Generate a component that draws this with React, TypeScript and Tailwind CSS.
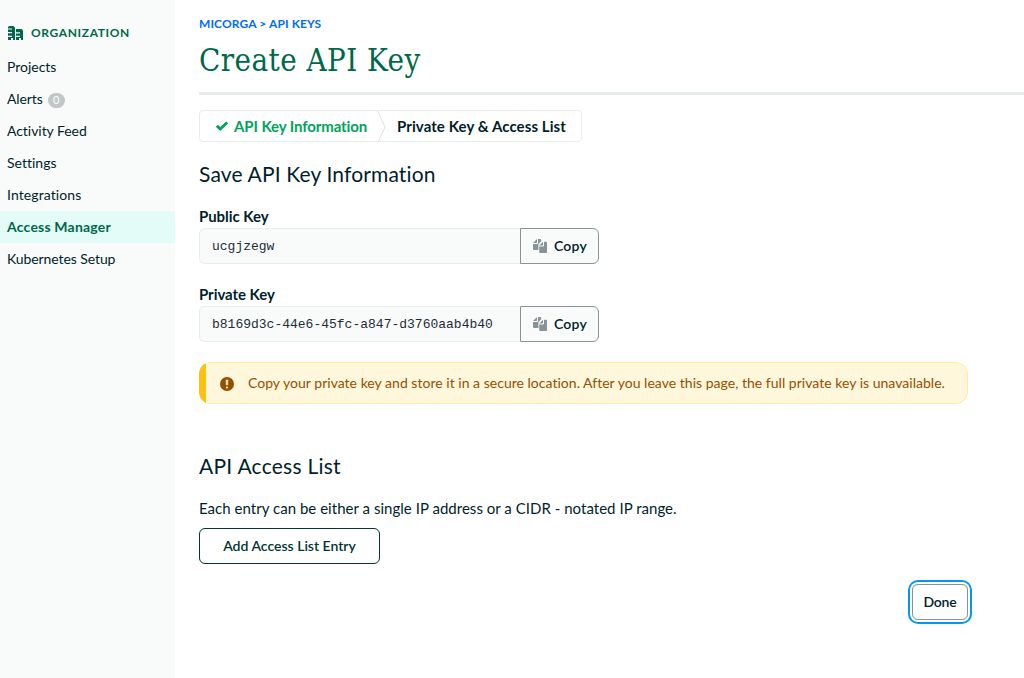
type Item = { label: string; badge?: number; active?: boolean; tracking?: string };

const items: Item[] = [
  { label: "Projects", tracking: "tracking-[-0.02px]" },
  { label: "Alerts", badge: 0, tracking: "tracking-[-0.1px]" },
  { label: "Activity Feed", tracking: "tracking-[-0.05px]" },
  { label: "Settings", tracking: "tracking-[0.01px]" },
  { label: "Integrations", tracking: "tracking-[0.09px]" },
  { label: "Access Manager", active: true, tracking: "tracking-[0.2px]" },
  { label: "Kubernetes Setup", tracking: "tracking-[-0.09px]" },
];

function OrgIcon() {
  return (
    <svg width="16" height="14" viewBox="0 0 16 14" fill="#00684a">
      <path d="M2 0h4.5L8 1.5V14H6v-2H4v2H1v-3h4V9.7H1V7.2h4V6H1V3.6h4V2.4H1V1z" />
      <path d="M9 3h5.5L16 4.5V14h-2v-2h-2v2H9v-3h4V9.7H9V7.5h4V6.2H9z" />
    </svg>
  );
}

function CopyIcon() {
  return (
    <svg width="14" height="14" viewBox="0 0 14 14" fill="#889397">
      <path d="M4 0v3.2a.8.8 0 0 1-.8.8H0zM5 0h2.2a1 1 0 0 1 1 1v1.2L5.4 5v6H1a1 1 0 0 1-1-1V5h4a1 1 0 0 0 1-1z" />
      <path d="M10 2.8v3a.8.8 0 0 1-.8.8H6.2zM11 2.8h2a1 1 0 0 1 1 1V13a1 1 0 0 1-1 1H7.2a1 1 0 0 1-1-1V7.6H10a1 1 0 0 0 1-1z" />
    </svg>
  );
}

function KeyField({ label, value, className }: { label: string; value: string; className: string }) {
  return (
    <div className={className}>
      <div className="h-5 text-[15px] leading-5 font-bold tracking-[-0.05px]">{label}</div>
      <div className="mt-0.5 flex h-9 w-[400px]">
        <div className="flex-1 rounded-l-md border border-r-0 border-[#e8edeb] bg-[#f9fbfa] pl-3 font-['Liberation_Mono',monospace] text-[13px] leading-9 text-[#1c2d38]">
          {value}
        </div>
        <button className="flex w-[79px] items-center rounded-r-md border border-[#889397] bg-[#f9fbfa] pl-3 text-[14px] font-semibold tracking-[0.2px]">
          <CopyIcon />
          <span className="mb-px ml-[7px]">Copy</span>
        </button>
      </div>
    </div>
  );
}

export default function App() {
  return (
    <div className="flex h-[678px] w-[1024px] overflow-hidden bg-white font-[Lato,sans-serif] text-[#001e2b] [font-variant-ligatures:none]">
      <aside className="w-[175px] shrink-0 bg-[#f9fbfa] pt-[15px]">
        <div className="flex h-9 items-center gap-2 pl-[7px] text-[12px] font-bold tracking-[0.62px] text-[#00684a]">
          <OrgIcon />
          <span>ORGANIZATION</span>
        </div>
        <nav>
          {items.map((item) => (
            <div
              key={item.label}
              className={`flex h-8 items-center pb-0.5 pl-[7px] text-[14px] ${item.tracking ?? ""} ${item.active ? "bg-[#e3fcf7] font-bold text-[#00684a]" : ""}`}
            >
              {item.label}
              {item.badge !== undefined && (
                <span className="mt-[5px] ml-[5px] flex h-[15px] w-[17px] items-center justify-center rounded-full bg-[#c1c7c6] text-[11px] text-white">
                  {item.badge}
                </span>
              )}
            </div>
          ))}
        </nav>
      </aside>
      <main className="min-w-0 flex-1 pl-6">
        <div className="mt-4 h-4 text-[12px] leading-4 font-bold tracking-[0.11px] text-[#016bf8]">MICORGA &gt; API KEYS</div>
        <h1 className="mt-2 h-10 font-['DejaVu_Serif_Condensed','DejaVu_Serif',serif] text-[31px] leading-10 tracking-[0.45px] text-[#00684a]">Create API Key</h1>
        <div className="mt-3 h-[3px] bg-[#e8edeb]" />

        <div className="mt-[15px] flex h-8 w-[383px] items-center rounded border border-[#e8edeb] text-[15px] font-bold">
          <svg className="ml-[15px]" width="14" height="10" viewBox="0 0 14 10">
            <path d="M1.8 4.8 5.2 8 12.2 1.5" fill="none" stroke="#00a35c" strokeWidth="2.9" />
          </svg>
          <span className="ml-[5px] w-[134px] tracking-[-0.1px] whitespace-nowrap text-[#00a35c]">API Key Information</span>
          <svg className="ml-[9px]" width="9" height="31" viewBox="0 0 9 31">
            <path d="M.5 0 8 16 1 31" fill="none" stroke="#dce2e0" />
          </svg>
          <span className="ml-[11px] tracking-[0.09px] whitespace-nowrap">Private Key &amp; Access List</span>
        </div>

        <h2 className="mt-[18px] h-7 text-[21px] leading-7 tracking-[0.15px]">Save API Key Information</h2>
        <KeyField className="mt-[18px]" label="Public Key" value="ucgjzegw" />
        <KeyField className="mt-5" label="Private Key" value="b8169d3c-44e6-45fc-a847-d3760aab4b40" />

        <div className="mt-5 flex h-[42px] w-[769px] overflow-hidden rounded-xl">
          <div className="w-[7px] bg-[#ffc010]" />
          <div className="flex flex-1 items-center rounded-r-xl border border-l-0 border-[#ffec9e] bg-[#fef7db] pl-[14px] text-[14px] text-[#944f01]">
            <svg className="mt-px" width="14" height="14" viewBox="0 0 14 14">
              <circle cx="7" cy="7" r="7" fill="#944f01" />
              <path d="M6 3h2l-.3 5H6.3z" fill="#fef7db" stroke="#fef7db" strokeWidth=".5" />
              <circle cx="7" cy="10.5" r="1.1" fill="#fef7db" />
            </svg>
            <span className="mb-px ml-[14px] tracking-[0.02px] whitespace-nowrap">
              Copy your private key and store it in a secure location. After you leave this page, the full private key is unavailable.
            </span>
          </div>
        </div>

        <h2 className="mt-12 h-7 text-[21px] leading-7 tracking-[0.25px]">API Access List</h2>
        <p className="mt-[18px] h-5 text-[15px] leading-5 tracking-[0.03px]">Each entry can be either a single IP address or a CIDR - notated IP range.</p>
        <button className="mt-[10px] block h-9 w-[181px] rounded-md border border-[#023430] pb-0.5 text-[14px] font-semibold text-[#023430]">
          Add Access List Entry
        </button>
        <div className="mt-5 flex w-[769px] justify-end">
          <button className="h-9 w-14 rounded-md border border-[#889397] pb-0.5 text-[14px] font-semibold tracking-[-0.2px] shadow-[0_0_0_2px_#ffffff,0_0_0_4px_#0498ec]">Done</button>
        </div>
      </main>
    </div>
  );
}
